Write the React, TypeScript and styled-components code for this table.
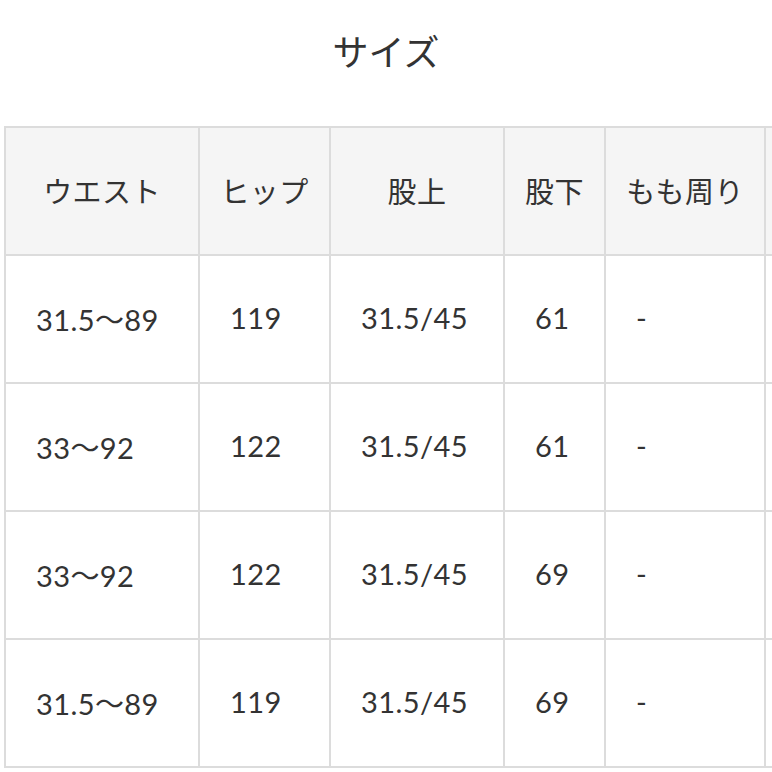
import React from "react";
import styled, { createGlobalStyle } from "styled-components";

const GlobalStyle = createGlobalStyle`
  body {
    margin: 0;
    background: #ffffff;
    font-family: "Lato", "Noto Sans CJK JP", sans-serif;
    color: #333333;
  }
`;

const Page = styled.div`
  width: 772px;
  height: 772px;
  overflow: hidden;
`;

const Title = styled.h2`
  margin: 0;
  height: 126px;
  box-sizing: border-box;
  padding-top: 33px;
  font-size: 36px;
  line-height: 38px;
  font-weight: 400;
  text-align: center;
  color: #333333;
`;

const TableWrap = styled.div`
  padding-left: 4px;
  overflow: hidden;
`;

const Grid = styled.div`
  display: grid;
  grid-template-columns: 192px 129px 172px 99px 158px 160px;
  grid-auto-rows: 126px;
  gap: 2px;
  padding: 2px;
  background: #dcdcdc;
  width: max-content;
`;

const Cell = styled.div<{ $head?: boolean }>`
  display: flex;
  align-items: center;
  justify-content: ${(p) => (p.$head ? "center" : "flex-start")};
  padding-left: ${(p) => (p.$head ? "0" : "30px")};
  padding-bottom: 3px;
  box-sizing: border-box;
  background: ${(p) => (p.$head ? "#f5f5f5" : "#ffffff")};
  font-size: 29px;
  letter-spacing: 0.4px;
  color: #333333;
  white-space: nowrap;
`;

const headers = ["ウエスト", "ヒップ", "股上", "股下", "もも周り", ""];

const rows = [
  ["31.5〜89", "119", "31.5/45", "61", "-", ""],
  ["33〜92", "122", "31.5/45", "61", "-", ""],
  ["33〜92", "122", "31.5/45", "69", "-", ""],
  ["31.5〜89", "119", "31.5/45", "69", "-", ""],
];

const App: React.FC = () => {
  return (
    <Page>
      <GlobalStyle />
      <Title>サイズ</Title>
      <TableWrap>
        <Grid>
          {headers.map((h, i) => (
            <Cell $head key={"h" + i}>
              {h}
            </Cell>
          ))}
          {rows.map((row, r) =>
            row.map((v, c) => <Cell key={r + "-" + c}>{v}</Cell>)
          )}
        </Grid>
      </TableWrap>
    </Page>
  );
};

export default App;
